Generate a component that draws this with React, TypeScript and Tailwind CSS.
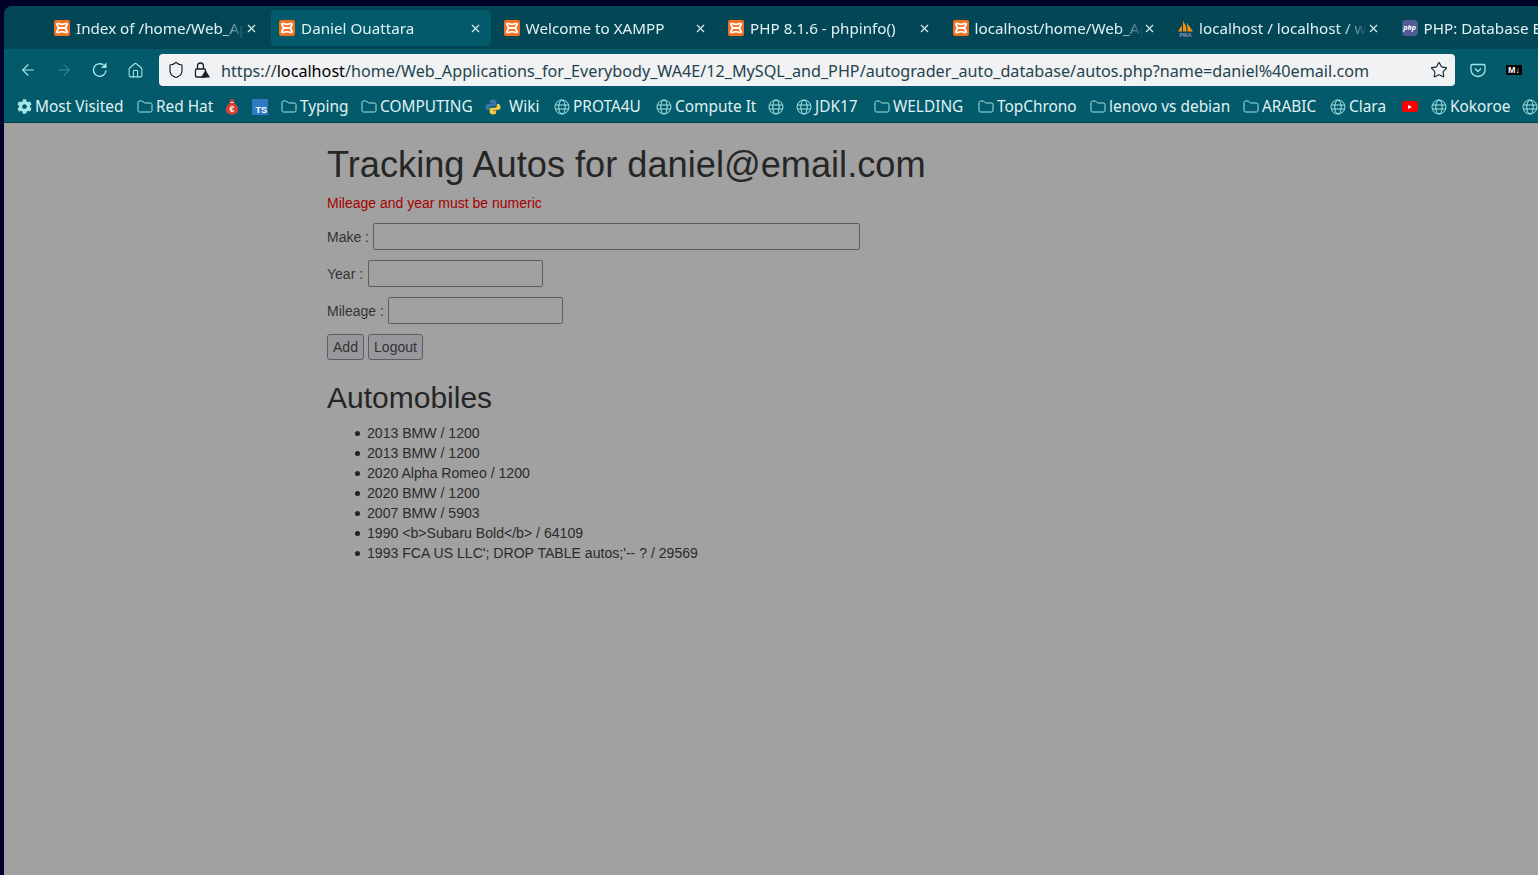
import { ArrowLeft, ArrowRight, Home, Shield, Star, X } from 'lucide-react';
import { FaCog } from 'react-icons/fa';

const xamppIcon = (
  <svg width="16" height="16" viewBox="0 0 16 16" className="shrink-0">
    <rect width="16" height="16" rx="2" fill="#f4701f" />
    <path
      fillRule="evenodd"
      d="M4 2.500C5.500 2.500 6 3.500 8 3.500S10.500 2.500 12 2.500C13.500 2.500 14 3.500 14 4.500 14 6 12.500 6.800 12.500 8S14 10 14 11.500C14 12.500 13.500 13.500 12 13.500 10.500 13.500 10 12.500 8 12.500S5.500 13.500 4 13.500C2.500 13.500 2 12.500 2 11.500 2 10 3.500 9.200 3.500 8S2 6 2 4.500C2 3.500 2.500 2.500 4 2.500ZM4.500 4.500C4 4.500 4 5 4.300 5.400L5.500 7H10.500L11.700 5.400C12 5 12 4.500 11.500 4.500 10.500 4.500 9.500 5.300 8 5.300S5.500 4.500 4.500 4.500ZM5.500 9 4.300 10.600C4 11 4 11.500 4.500 11.500 5.500 11.500 6.500 10.700 8 10.700S10.500 11.500 11.500 11.500C12 11.500 12 11 11.700 10.600L10.500 9Z"
      fill="#fff"
    />
  </svg>
);

const sailIcon = (
  <svg width="17" height="17" viewBox="0 0 17 17" className="shrink-0">
    <path d="M1 11.500 5 5v6.500zM6 11.500V1l3 5 .5 5.500zM10.500 11.500 10 3l6 8.500z" fill="#f29111" />
    <text x="8.500" y="16.500" textAnchor="middle" fontSize="5.500" fontWeight="700" fill="#8a8fc4" fontFamily="Liberation Sans, sans-serif">PMA</text>
  </svg>
);

const phpIcon = (
  <div className="flex h-4 w-4 shrink-0 items-center justify-center rounded-sm bg-[#4f5b93] text-[7px] font-bold italic text-white">php</div>
);

const tabs = [
  { title: 'Index of /home/Web_Applications', icon: xamppIcon },
  { title: 'Daniel Ouattara', icon: xamppIcon, active: true },
  { title: 'Welcome to XAMPP', icon: xamppIcon },
  { title: 'PHP 8.1.6 - phpinfo()', icon: xamppIcon },
  { title: 'localhost/home/Web_Applications', icon: xamppIcon },
  { title: 'localhost / localhost / wa4e', icon: sailIcon },
  { title: 'PHP: Database Extensions', icon: phpIcon },
];

const autos = [
  '2013 BMW / 1200',
  '2013 BMW / 1200',
  '2020 Alpha Romeo / 1200',
  '2020 BMW / 1200',
  '2007 BMW / 5903',
  '1990 <b>Subaru Bold</b> / 64109',
  "1993 FCA US LLC'; DROP TABLE autos;'-- ? / 29569",
];

const folder = (
  <svg width="16" height="16" viewBox="0 0 16 16" fill="none" stroke="#a5e6e6" strokeWidth="1" className="shrink-0">
    <path d="M1 3.500a1.500 1.500 0 0 1 1.500-1.500h3l2 2h6a1.500 1.500 0 0 1 1.500 1.500v6a1.500 1.500 0 0 1-1.500 1.500h-11a1.500 1.500 0 0 1-1.500-1.500z" />
  </svg>
);

const globe = (
  <svg width="16" height="16" viewBox="0 0 16 16" fill="none" stroke="#a5e6e6" strokeWidth="1" className="shrink-0">
    <circle cx="8" cy="8" r="7" />
    <ellipse cx="8" cy="8" rx="3.200" ry="7" />
    <path d="M1.300 6h13.400M1.300 10h13.400" />
  </svg>
);

const moneyBag = (
  <svg width="12" height="16" viewBox="0 0 12 16" className="shrink-0">
    <path d="M3.500 0.500h5L7.500 3.500c2.500 1.500 4.500 4 4.500 7 0 3.500-2.500 5-6 5s-6-1.500-6-5c0-3 2-5.500 4.500-7z" fill="#d9402f" />
    <path d="M4 3.500h4" stroke="#fbd5c8" strokeWidth="1" />
    <text x="6" y="13" textAnchor="middle" fontSize="9" fontWeight="700" fill="#fff" fontFamily="Liberation Sans, sans-serif">€</text>
  </svg>
);

const python = (
  <div className="w-[21px] shrink-0">
    <svg width="16" height="16" viewBox="0 0 16 16">
      <path d="M8 .500C5 .500 4.800 1.800 4.800 3v1.500h3.400V5H3C1.500 5 .500 6.200 .500 8S1.500 11 3 11h1.500V9.300C4.500 8 5.500 7.300 6.700 7.300h3c1 0 1.700-.8 1.700-1.800V3c0-1.500-1.500-2.500-3.400-2.500z" fill="#3a76a8" />
      <path d="M8 15.500c3 0 3.200-1.300 3.200-2.500v-1.500H7.800V11H13c1.500 0 2.500-1.200 2.500-3S14.500 5 13 5h-1.100v1.700c0 1.300-1 2-2.200 2h-3.400c-1 0-1.700.8-1.700 1.800V13c0 1.500 1.500 2.500 3.400 2.500z" fill="#f7c93e" />
    </svg>
  </div>
);

const bookmarks = [
  { label: 'Most Visited', icon: <FaCog size={15} className="shrink-0 text-[#a5e6e6]" />, left: 17 },
  { label: 'Red Hat', icon: folder, left: 137 },
  { label: '', icon: moneyBag, left: 226 },
  { label: '', icon: <div className="flex h-4 w-4 items-end justify-end bg-[#3178c6] pr-px font-['Liberation_Sans',sans-serif] text-[9px] font-bold leading-[10px] text-white">TS</div>, left: 252 },
  { label: 'Typing', icon: folder, left: 281 },
  { label: 'COMPUTING', icon: folder, left: 361 },
  { label: 'Wiki', icon: python, left: 485 },
  { label: 'PROTA4U', icon: globe, left: 554 },
  { label: 'Compute It', icon: globe, left: 656 },
  { label: '', icon: globe, left: 768 },
  { label: 'JDK17', icon: globe, left: 796 },
  { label: 'WELDING', icon: folder, left: 874 },
  { label: 'TopChrono', icon: folder, left: 978 },
  { label: 'lenovo vs debian', icon: folder, left: 1090 },
  { label: 'ARABIC', icon: folder, left: 1243 },
  { label: 'Clara', icon: globe, left: 1330 },
  { label: '', icon: <div className="flex h-[11px] w-4 items-center justify-center rounded-[3px] bg-[#f00]"><div className="h-0 w-0 border-y-[2.500px] border-l-4 border-y-transparent border-l-white" /></div>, left: 1402 },
  { label: 'Kokoroe', icon: globe, left: 1431 },
  { label: '', icon: globe, left: 1522 },
];

function Tab({ title, icon, active }: { title: string; icon: React.ReactNode; active?: boolean }) {
  return (
    <div className={`flex h-9 w-[220px] shrink-0 items-center rounded-[4px] pl-[8px] pr-[9px] first:w-[220.600px] ${active ? 'bg-[#025a6b]' : ''}`}>
      <div className="mr-[6px] flex w-4 shrink-0 justify-center">{icon}</div>
      <span className="min-w-0 flex-1 overflow-hidden whitespace-nowrap text-[15.200px] text-[#e0f2f4] [mask-image:linear-gradient(to_left,transparent,black_24px)]">{title}</span>
      <X size={13} className="shrink-0 text-[#e0f2f4]" />
    </div>
  );
}

export default function App() {
  return (
    <div className="flex h-[875px] w-[1538px] flex-col overflow-hidden bg-[#00012a] font-['Noto_Sans',sans-serif] text-[16px]">
      <div className="h-[6px] shrink-0 bg-[#00012a]" />
      <div className="ml-1 flex min-h-0 flex-1 flex-col overflow-hidden rounded-tl-lg">
        <div className="flex h-[43px] shrink-0 items-start gap-[4.500px] overflow-hidden bg-[#034756] pl-[42px] pt-1">
          {tabs.map((t) => (
            <Tab key={t.title} {...t} />
          ))}
        </div>
        <div className="flex h-[42px] shrink-0 items-center bg-[#025a6b]">
          <div className="flex w-[155px] shrink-0 items-center pl-[15px] text-[#a5e6e6]">
            <ArrowLeft size={18} strokeWidth={1.5} />
            <ArrowRight size={18} strokeWidth={1.3} className="ml-[18px] opacity-40" />
            <svg width="18" height="18" viewBox="0 0 18 18" fill="none" className="ml-[18px]">
              <path d="M15 9.500A6.300 6.300 0 1 1 12.500 4" stroke="#a5e6e6" strokeWidth="1.400" />
              <path d="M15.500 1.500v5.500H10z" fill="#a5e6e6" />
            </svg>
            <Home size={17} strokeWidth={1.5} className="ml-[18px]" />
          </div>
          <div className="flex h-8 w-[1296px] shrink-0 items-center rounded-[4px] bg-[#f1f2f4] pl-[8px] pr-[7px]">
            <Shield size={18} strokeWidth={1.6} className="shrink-0 text-[#15222b]" />
            <div className="relative ml-[9px] h-4 w-4 shrink-0">
              <svg width="16" height="16" viewBox="0 0 16 16" fill="none" stroke="#15222b" strokeWidth="1.300">
                <rect x="1.500" y="7" width="10" height="8" rx="1" />
                <path d="M3.500 7V4a3 3 0 0 1 6 0v3" />
                <path d="M11.500 8 16 15.500H7z" fill="#15222b" stroke="none" />
              </svg>
            </div>
            <div className="ml-[11px] min-w-0 flex-1 truncate pt-[2px] text-[16.170px]">
              <span className="text-[#24434c]">https://</span>
              <span className="text-[#000]">localhost</span>
              <span className="text-[#24434c]">/home/Web_Applications_for_Everybody_WA4E/12_MySQL_and_PHP/autograder_auto_database/autos.php?name=daniel%40email.com</span>
            </div>
            <Star size={18} strokeWidth={1.5} className="shrink-0 text-[#15222b]" />
          </div>
          <div className="flex flex-1 items-center pl-[15px]">
            <svg width="16" height="16" viewBox="0 0 16 16" fill="none" stroke="#a5e6e6" strokeWidth="1.300">
              <path d="M2 2.500h12a1 1 0 0 1 1 1V8a7 6.500 0 0 1-14 0V3.500a1 1 0 0 1 1-1z" />
              <path d="M5 6.500 8 9.500l3-3" />
            </svg>
            <div className="ml-5 flex h-[10px] w-4 items-center justify-center rounded-[1px] bg-black font-['Liberation_Sans',sans-serif] text-[9px] font-bold leading-none text-white">M↓</div>
          </div>
        </div>
        <div className="relative h-[32px] shrink-0 border-b border-[#03404e] bg-[#025a6b] text-[15.400px]">
          {bookmarks.map((b) => (
            <div key={b.left} className="absolute top-0 flex h-[31px] items-center gap-[3px] whitespace-nowrap text-[#e0f2f4]" style={{ left: b.left - 4 }}>
              {b.icon}
              {b.label && <span>{b.label}</span>}
            </div>
          ))}
        </div>
        <div className="min-h-0 flex-1 bg-[#a1a1a1] pl-[323px] font-['Liberation_Sans',sans-serif] text-[14px] leading-5 text-[#262626]">
          <h1 className="mt-[19px] text-[36.200px] leading-[46px]">Tracking Autos for daniel@email.com</h1>
          <p className="mt-[5px] text-[#a80000]">Mileage and year must be numeric</p>
          <div className="mt-[10px] flex h-[27px] items-center gap-1 text-[#333]">
            <span>Make :</span>
            <input className="h-[27px] w-[487px] rounded-[2px] border border-[#5c5c63]" />
          </div>
          <div className="mt-[10px] flex h-[27px] items-center gap-[5px] text-[#333]">
            <span>Year :</span>
            <input className="h-[27px] w-[175px] rounded-[2px] border border-[#5c5c63]" />
          </div>
          <div className="mt-[10px] flex h-[27px] items-center gap-1 text-[#333]">
            <span>Mileage :</span>
            <input className="h-[27px] w-[175px] rounded-[2px] border border-[#5c5c63]" />
          </div>
          <div className="mt-[10px] flex items-center gap-1 text-[#333]">
            <button className="h-[26px] w-[37px] rounded-[3px] border border-[#5c5c63] bg-[#98989c]">Add</button>
            <button className="h-[26px] w-[55px] rounded-[3px] border border-[#5c5c63] bg-[#98989c]">Logout</button>
          </div>
          <h2 className="mt-[20px] text-[30px] leading-[36px]">Automobiles</h2>
          <ul className="mt-[7px] pl-[40px] text-[14.080px] text-[#2b2b2b]">
            {autos.map((a, i) => (
              <li key={i} className="relative before:absolute before:left-[-12px] before:top-[8px] before:h-[5px] before:w-[5px] before:rounded-full before:bg-[#222]">{a}</li>
            ))}
          </ul>
        </div>
      </div>
    </div>
  );
}
